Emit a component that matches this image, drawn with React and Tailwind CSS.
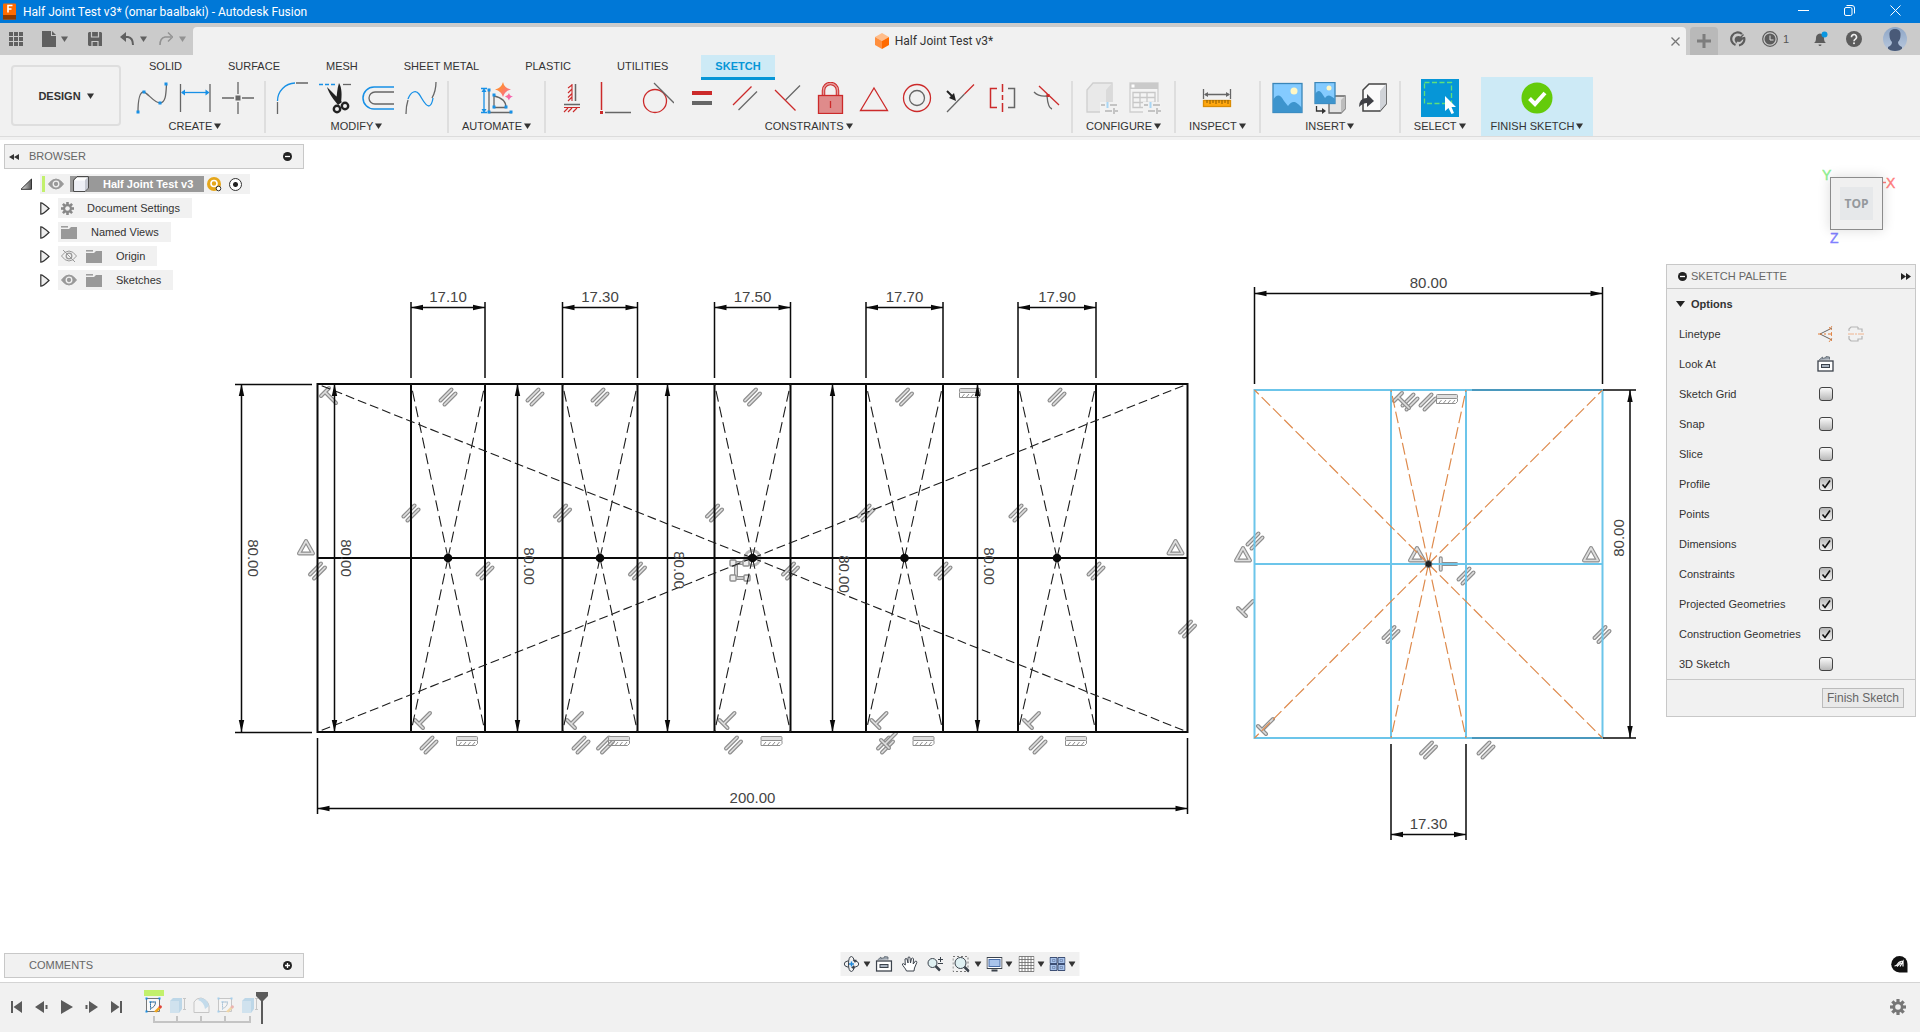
import React from "react";

const G = "#666666";
const B = "#1790e6";
const R = "#cc2a2a";

function Caret({ className = "text-[#333]" }) {
  return (
    <svg width="7" height="6" viewBox="0 0 7 6" className={className} aria-hidden="true">
      <path d="M0 .5h7L3.500 6z" fill="currentColor" />
    </svg>
  );
}

function Ico({ children }) {
  return (
    <svg viewBox="0 0 32 32" width="32" height="32" fill="none" strokeWidth="1.3" aria-hidden="true">
      {children}
    </svg>
  );
}

function Sq({ x, y, s = 3, fill = B }) {
  return <rect x={x - s / 2} y={y - s / 2} width={s} height={s} fill={fill} />;
}

function ConfigMarks() {
  return (
    <g stroke="#c4c4c4" strokeWidth="2">
      <path d="M15 23h4M24 23h7M19 29h7M28 26v6M28 29h4" />
      <path d="M21.500 20v6" stroke="#a9d6f5" />
    </g>
  );
}

const icons = {
  spline: (
    <Ico>
      <path d="M2 30C2 18 4 10 7.500 10S18 21 24 21s6-10 6.500-19" stroke={G} />
      <Sq x={2} y={30} /><Sq x={8} y={10} /><Sq x={24} y={21} /><Sq x={30} y={2} />
    </Ico>
  ),
  dimension: (
    <Ico>
      <path d="M1.500 2v28M31 2v28" stroke={G} />
      <path d="M3 10.500h26" stroke={B} />
      <path d="M2 10.500l4-3v6zM30.500 10.500l-4-3v6z" fill={B} />
    </Ico>
  ),
  point: (
    <Ico>
      <path d="M16 0v12M16 20v12M0 16h12M20 16h12" stroke={G} />
      <rect x="13.500" y="13.500" width="5" height="5" fill={G} />
    </Ico>
  ),
  fillet: (
    <Ico>
      <path d="M1.500 20v12M20 1h12" stroke={G} />
      <path d="M1.500 19A18 18 0 0 1 19 1" stroke={B} />
    </Ico>
  ),
  trim: (
    <Ico>
      <path d="M0 2.500h4M6 2.500h4M12 2.500h4" stroke={B} />
      <path d="M24 2.500h8" stroke={G} />
      <path d="M8 5l15 15-4 3C15 18 10 12 8 5zM20 1c3 5 3 12 2 20l-5-2c1-6 1-12 3-18z" fill="#222" />
      <circle cx="18" cy="27" r="3.200" stroke="#222" strokeWidth="2.400" />
      <circle cx="26" cy="24" r="3.200" stroke="#222" strokeWidth="2.400" />
    </Ico>
  ),
  offset: (
    <Ico>
      <path d="M32 5H12A11 11 0 0 0 12 27H32" stroke={B} strokeWidth="1.500" />
      <path d="M32 10H13a6 6 0 0 0 0 12H32" stroke={G} />
    </Ico>
  ),
  breakCurve: (
    <Ico>
      <path d="M1 32q0-8 2-14M27 16q4-7 4-16" stroke={G} />
      <path d="M3 17C6 9 11 8 14 12S20 24 24 24q3-1 4-8" stroke={B} />
    </Ico>
  ),
  automate: (
    <Ico>
      <path d="M3 8v20M0 6.500h6M0 30.500h6" stroke={B} />
      <path d="M3 6l2.500 4h-5zM3 31l2.500-4h-5z" fill={B} />
      <path d="M8 8v22.500h23M13 14v11.500h12q0-9-12-11.500" stroke={G} />
      <Sq x={8} y={8} /><Sq x={8} y={30} /><Sq x={30} y={30} />
      <Sq x={13} y={13} /><Sq x={13} y={25} /><Sq x={25} y={25} />
      <defs>
        <linearGradient id="spark" x1="0" y1="0" x2="1" y2="1">
          <stop offset=".3" stopColor="#ff8a3c" /><stop offset="1" stopColor="#f45ad0" />
        </linearGradient>
      </defs>
      <path d="M22 0q1.200 6 8 7.500Q23.500 9 22 15q-1.500-6-8-7.500Q20.500 6 22 0zM28 11q.6 3 4 3.500-3.400.8-4 4-.8-3.200-4-4 3.400-.8 4-3.500z" fill="url(#spark)" />
    </Ico>
  ),
  fixHV: (
    <Ico>
      <path d="M19.500 2v17M8 22.500h16" stroke={G} strokeWidth="1.500" />
      <path d="M16 2v17M16 3l-4 3M16 7l-4 4M16 11.500l-4 4M16 15l-4 4M8 25.500h16M12 26l-4 4M16 26l-4 4M21 26l-4 4" stroke={R} strokeWidth="1.100" />
    </Ico>
  ),
  coincident: (
    <Ico>
      <path d="M2.500 0v28" stroke={R} strokeWidth="1.500" /><Sq x={2.5} y={30.5} fill={R} />
      <path d="M6 30.500h26" stroke={G} strokeWidth="1.500" />
    </Ico>
  ),
  tangent: (
    <Ico><circle cx="13" cy="19" r="11.500" stroke={R} /><path d="M12 1l20 20" stroke={G} /></Ico>
  ),
  equal: (
    <Ico><rect x="7" y="9" width="20" height="4" fill={R} /><rect x="7" y="19" width="20" height="4" fill={G} /></Ico>
  ),
  parallel: (
    <Ico><path d="M5 23L23.500 4.500" stroke={R} /><path d="M10.500 28L29 9.500" stroke={G} /></Ico>
  ),
  perpendicular: (
    <Ico><path d="M4 8l20.500 20.500" stroke={R} /><path d="M14.500 18L29 3.500" stroke={G} /></Ico>
  ),
  lock: (
    <Ico>
      <path d="M9.500 14V8.500a7 7 0 0 1 14 0V14" stroke={R} strokeWidth="3.500" />
      <path d="M9.500 14V8.500a7 7 0 0 1 14 0V14" stroke="#e59a9a" strokeWidth="1.500" />
      <rect x="4.500" y="13.500" width="24" height="18" fill="#df8b8b" stroke={R} />
      <path d="M16.500 19v7" stroke={R} />
    </Ico>
  ),
  triangle: (
    <Ico><path d="M17 6l13.500 22.500h-27z" stroke={R} /></Ico>
  ),
  concentric: (
    <Ico><circle cx="17" cy="16" r="13.500" stroke={R} /><circle cx="17" cy="16" r="7.500" stroke={G} /></Ico>
  ),
  midpoint: (
    <Ico>
      <path d="M4 30L21.500 12" stroke={G} /><path d="M21.500 12L31 2.500" stroke={R} />
      <path d="M4 9l6 6" stroke="#222" strokeWidth="2" /><path d="M13 19l-7-3 5-5z" fill="#222" />
    </Ico>
  ),
  symmetry: (
    <Ico>
      <path d="M11 6.500H4.500v19H11M16.500 2v8M16.500 13v5M16.500 21v9" stroke={R} strokeWidth="1.500" />
      <path d="M22 6.500h6.500v19H22" stroke={G} strokeWidth="1.500" />
    </Ico>
  ),
  curvature: (
    <Ico>
      <path d="M5 10q5 5 13 4 1 12 5 13" stroke={G} /><path d="M10 4l20 19" stroke={R} />
      <Sq x={19} y={13.5} fill={R} />
    </Ico>
  ),
  configPart: (
    <Ico>
      <path d="M1 8l6-7h19v22l-6 7H1z" fill="#e9e9e9" stroke="#cfcfcf" />
      <path d="M20 8l6-7v22l-6 7z" fill="#dadada" /><path d="M14 20h18v12H14z" fill="#f2f2f2" />
      <ConfigMarks />
    </Ico>
  ),
  configTable: (
    <Ico>
      <path d="M1 1h28v29H1z" fill="#f4f4f4" stroke="#cfcfcf" /><path d="M1 1h28v6H1z" fill="#cacaca" />
      <rect x="2.500" y="2.500" width="3" height="3" fill="#fff" />
      <path d="M4 10.500h22v15H4zM4 15.500h22M4 20.500h22M11 10.500v15M18 10.500v15" stroke="#c8c8c8" />
      <path d="M14 20h18v12H14z" fill="#f2f2f2" /><ConfigMarks />
    </Ico>
  ),
  measure: (
    <Ico>
      <path d="M2.500 7v10M29.500 7v10M4 12.500h24" stroke={G} />
      <path d="M3 12.500l4-2.500v5zM29 12.500l-4-2.500v5z" fill={G} />
      <rect x="2.500" y="18.500" width="27" height="6" fill="#ffa70f" stroke="#d98c06" />
      <path d="M6 18v3M9 18v4M12 18v3M15 18v4M18 18v3M21 18v4M24 18v3M27 18v4" stroke="#8a5a00" strokeWidth="1" />
    </Ico>
  ),
  image: (
    <Ico>
      <rect x="2" y="1.500" width="29" height="29" fill="#84cbff" stroke="#3a86b8" />
      <circle cx="23" cy="9" r="3.500" fill="#fff7c4" />
      <path d="M2 18c4-6 7-6 11 1l4 5c4-5 7-6 14 2v4.500H2z" fill="#3d94cd" />
    </Ico>
  ),
  imageBody: (
    <Ico>
      <path d="M15 18l3-4h13v13l-4 4H15z" fill="#e3e3e3" stroke={G} /><path d="M27 18l4-4v13l-4 4z" fill="#bdbdbd" />
      <rect x="1" y=".5" width="20" height="21" fill="#84cbff" stroke="#3a86b8" />
      <circle cx="15" cy="6" r="2.500" fill="#fff7c4" />
      <path d="M1 12c3-4 5-4 8 1l2 3c3-4 5-3 10 1v4.500H1z" fill="#3d94cd" />
      <path d="M2.500 24v5H9" stroke="#333" /><path d="M8 26l4 3-4 3z" fill="#333" />
    </Ico>
  ),
  insertBody: (
    <Ico>
      <path d="M6 8l6-6h17v20l-6 7H6z" fill="#fafafa" stroke="#444" strokeWidth="1.500" />
      <path d="M23 9l6-7v20l-6 7z" fill="#d0d3d8" />
      <path d="M2 25q0-9 8-9v-4l7 7-7 6v-4q-4 0-8 4z" fill="#3f4045" />
    </Ico>
  ),
  select: (
    <svg width="38" height="38" viewBox="0 0 38 38" fill="none" className="bg-[#0696d7]" aria-hidden="true">
      <path d="M3.500 3.500h27v21h-27z" stroke="#5fe07a" strokeDasharray="5 2.500" strokeWidth="1.300" />
      <path d="M24 17v15l3.500-3 3 6 2.500-1-2.500-6h4.500z" fill="#fff" />
    </svg>
  ),
  finish: (
    <Ico>
      <circle cx="16" cy="16" r="15.500" fill="#64cb0a" />
      <path d="M8.500 16.500l5.500 5.500 10-11" stroke="#fff" strokeWidth="4" />
    </Ico>
  ),
};

const groups = [
  { label: "CREATE", items: [["Spline", "spline"], ["Sketch Dimension", "dimension"], ["Point", "point"]] },
  { label: "MODIFY", items: [["Fillet", "fillet"], ["Trim", "trim"], ["Offset", "offset"], ["Blend", "breakCurve"]] },
  { label: "AUTOMATE", items: [["Automate", "automate"]] },
  {
    label: "CONSTRAINTS",
    items: [
      ["Horizontal/Vertical", "fixHV"], ["Coincident", "coincident"], ["Tangent", "tangent"], ["Equal", "equal"],
      ["Parallel", "parallel"], ["Perpendicular", "perpendicular"], ["Fix", "lock"], ["MidPoint", "triangle"],
      ["Concentric", "concentric"], ["Collinear", "midpoint"], ["Symmetry", "symmetry"], ["Curvature", "curvature"],
    ],
  },
  { label: "CONFIGURE", items: [["Configure part", "configPart"], ["Configuration table", "configTable"]] },
  { label: "INSPECT", items: [["Measure", "measure"]] },
  { label: "INSERT", items: [["Insert image", "image"], ["Insert decal", "imageBody"], ["Insert derive", "insertBody"]] },
  { label: "SELECT", items: [["Select", "select"]] },
  { label: "FINISH SKETCH", items: [["Finish sketch", "finish"]], active: true },
];

function TitleBar() {
  return (
    <header className="flex h-[23px] shrink-0 items-start bg-[#0078d7] pl-[3px] text-white">
      <svg width="14" height="17" viewBox="0 0 14 17" className="mt-[3px]" aria-hidden="true">
        <rect width="13" height="16" y=".5" rx="1" fill="#ff6b00" />
        <rect y="12" width="13" height="4.500" fill="#8c3a00" />
        <path d="M5 9.500v-7h4.500M5 6h3.500" stroke="#fff" strokeWidth="1.600" fill="none" />
      </svg>
      <h1 className="ml-1.5 mt-1 flex-1 font-[Roboto,'Noto_Sans',sans-serif] text-[12px] leading-4">
        Half Joint Test v3* (omar baalbaki) - Autodesk Fusion
      </h1>
      <div className="flex pr-0.5">
        <button aria-label="Minimize" className="flex h-[21px] w-[46px] items-center justify-center">
          <svg width="11" height="11"><path d="M0 5.500h11" stroke="#fff" /></svg>
        </button>
        <button aria-label="Restore" className="flex h-[21px] w-[46px] items-center justify-center">
          <svg width="11" height="11" fill="none" stroke="#fff"><rect x=".5" y="2.500" width="7.500" height="8" rx="1.500" /><path d="M2.500.5H8a2.500 2.500 0 0 1 2.500 2.500v5.500" /></svg>
        </button>
        <button aria-label="Close" className="flex h-[21px] w-[46px] items-center justify-center">
          <svg width="11" height="11"><path d="M.5.5l10 10M10.500.5l-10 10" stroke="#fff" /></svg>
        </button>
      </div>
    </header>
  );
}

function TabBar() {
  return (
    <div className="flex h-8 shrink-0 items-stretch bg-[#cbcbcb] pt-1">
      <div className="flex w-[193px] shrink-0 items-center pb-1 pl-[9px] text-[#606060]">
        <button aria-label="Data panel">
          <svg width="14" height="14" fill="currentColor">
            <path d="M0 0h4v4H0zM5 0h4v4H5zM10 0h4v4h-4zM0 5h4v4H0zM5 5h4v4H5zM10 5h4v4h-4zM0 10h4v4H0zM5 10h4v4H5zM10 10h4v4h-4z" />
          </svg>
        </button>
        <button aria-label="File" className="ml-[19px] flex items-center gap-[5px]">
          <svg width="14" height="16" fill="currentColor"><path d="M0 0h9v5h5v11H0zM10 0l4 4h-4z" /></svg>
          <Caret className="text-[#606060]" />
        </button>
        <button aria-label="Save" className="ml-5">
          <svg width="14" height="14"><path d="M0 1l1-1h12l1 1v13H1l-1-1z" fill="#606060" /><path d="M3.500 0v5h7V0M4 14V9.500h6V14" stroke="#cbcbcb" strokeWidth="1.200" fill="none" /></svg>
        </button>
        <button aria-label="Undo" className="ml-[18px] flex items-center gap-[6px]">
          <svg width="14" height="14" fill="none"><path d="M2 5h6q5 1 5 8" stroke="#606060" strokeWidth="2" /><path d="M0 5l6-5v10z" fill="#606060" /></svg>
          <Caret className="text-[#606060]" />
        </button>
        <button aria-label="Redo" className="ml-3 flex items-center gap-[6px] text-[#929292]">
          <svg width="14" height="14" fill="none"><path d="M12 5H6Q1 6 1 13" stroke="currentColor" strokeWidth="1.600" /><path d="M9 .5L13.500 5 9 9.500" stroke="currentColor" strokeWidth="1.400" /></svg>
          <Caret className="text-[#929292]" />
        </button>
      </div>
      <div className="flex min-w-0 flex-1 items-center rounded-t bg-[#f1f1f1] pl-2 pr-0.5">
        <div className="flex flex-1 items-center justify-center gap-1.5">
          <svg width="14" height="16"><path d="M7 0l7 4-7 4-7-4z" fill="#ffbd8a" /><path d="M0 4l7 4v8l-7-4z" fill="#ff8f3e" /><path d="M14 4L7 8v8l7-4z" fill="#ff6a00" /></svg>
          <span className="font-[Roboto,'Liberation_Sans',sans-serif] text-[12px]">Half Joint Test v3*</span>
        </div>
        <button aria-label="Close tab" className="p-1">
          <svg width="9" height="9"><path d="M.5.5l8 8M8.500.5l-8 8" stroke="#777" strokeWidth="1.300" /></svg>
        </button>
      </div>
      <button aria-label="New tab" className="ml-1 flex w-7 items-center justify-center rounded-t bg-[#b9b9b9]">
        <svg width="14" height="14"><path d="M7 0v14M0 7h14" stroke="#7d7d7d" strokeWidth="3" /></svg>
      </button>
      <div className="flex items-center pb-1 pl-3 pr-[13px] text-[11px] text-[#555]">
        <button aria-label="Extensions">
          <svg width="16" height="16" fill="none"><path d="M5.500 14A6.500 6.500 0 1 1 12 3M14 6a6.500 6.500 0 0 1-5 8.500" stroke="#5c5c5c" strokeWidth="2.200" /><path d="M5.500 11c-2-3 0-6 3-6l2 .5L13 3l1 1-2.500 2.500L14 6l.5 1.500L12 9c-1 2-3 2.500-4.500 1.500L6 12.500z" fill="#5c5c5c" /></svg>
        </button>
        <button aria-label="Job status" className="ml-4 flex items-center gap-[5px]">
          <svg width="16" height="16" fill="none"><circle cx="8" cy="8" r="7.300" stroke="#5c5c5c" strokeWidth="1.200" /><circle cx="8" cy="8" r="5.500" fill="#5c5c5c" /><path d="M8 4.500V9h3.500" stroke="#ddd" /></svg>
          1
        </button>
        <button aria-label="Notifications" className="ml-6">
          <svg width="16" height="16"><path d="M1 12q2-1 2-5 0-4 4-4.500 4 .5 4 4.500t2 5zM5.500 13.500h3a1.500 1.500 0 0 1-3 0z" fill="#5c5c5c" /><circle cx="11.500" cy="3.500" r="3" fill="#0a96e0" /></svg>
        </button>
        <button aria-label="Help" className="ml-[17px]">
          <svg width="16" height="16" fill="none"><circle cx="8" cy="8" r="8" fill="#5c5c5c" /><path d="M5.500 6.200a2.500 2.500 0 1 1 3.800 2q-1.300.7-1.300 2" stroke="#eee" strokeWidth="1.600" /><circle cx="8" cy="12.300" r="1" fill="#eee" /></svg>
        </button>
        <button aria-label="Account" className="ml-[21px]">
          <svg width="24" height="24"><defs><linearGradient id="av" x2="0" y2="1"><stop stopColor="#8ea6c6" /><stop offset="1" stopColor="#b9c8dd" /></linearGradient><clipPath id="avc"><circle cx="12" cy="12" r="12" /></clipPath></defs>
            <circle cx="12" cy="12" r="12" fill="url(#av)" /><path d="M12 2c4 0 6 2.500 5.500 6.500 0 3-1 5-2.500 6.500 0 3 2 4 4 5v4H5v-4c2-1 4-2 4-5-1.500-1.500-2.500-3.500-2.500-6.500C6 4.500 8 2 12 2z" fill="#495a78" clipPath="url(#avc)" /></svg>
        </button>
      </div>
    </div>
  );
}

function Ribbon() {
  const tabs = ["SOLID", "SURFACE", "MESH", "SHEET METAL", "PLASTIC", "UTILITIES", "SKETCH"];
  return (
    <div className="flex shrink-0 border-b border-[#dcdcdc] bg-[#f1f1f1]">
      <button className="mb-[10px] ml-[11px] mt-[10px] flex w-[110px] shrink-0 items-center justify-center gap-1.5 rounded border-2 border-[#dedede] font-bold">
        DESIGN <Caret />
      </button>
      <div className="flex min-w-0 flex-1 flex-col">
        <nav className="ml-[15px] flex h-[26px] items-start gap-5">
          {tabs.map((t) => (
            <a
              key={t}
              href="#"
              className={
                t === "SKETCH"
                  ? "flex h-[25px] items-center border-b-[3px] border-[#0696d7] bg-[#cdeaf6] px-[14px] font-bold leading-4 text-[#0696d7]"
                  : "flex h-[22px] items-center px-[13px] leading-4"
              }
            >
              {t}
            </a>
          ))}
        </nav>
        <div className="ml-[5px] flex items-start">
          {groups.map((g, i) => (
            <React.Fragment key={g.label}>
              <section
                className={
                  g.active
                    ? "-mt-1 ml-0.5 flex h-[59px] flex-col items-center bg-[#cdeaf6] px-[10px] pt-1"
                    : "flex h-[55px] flex-col items-center px-[10px]"
                }
              >
                <div className="flex h-[34px] items-center gap-[11px]">
                  {g.items.map(([name, icon]) => (
                    <button key={name} aria-label={name} title={name}>{icons[icon]}</button>
                  ))}
                </div>
                <button className={g.active ? "flex items-center gap-0.5 pt-[3px] leading-4" : "flex items-center gap-0.5 px-[3px] pt-[3px] leading-4"}>
                  {g.label} <Caret />
                </button>
              </section>
              {i < 7 && <div className="h-[52px] w-0.5 shrink-0 bg-[#dedede]" />}
            </React.Fragment>
          ))}
        </div>
      </div>
    </div>
  );
}

/* Sketch geometry */
const INK = "#0a0a0a";

function Arrow({ x, y, a }) {
  return <path d="M0 0L-12-2.700V2.700z" fill={INK} transform={`translate(${x} ${y}) rotate(${a})`} />;
}

function DimText({ x, y, a = 0, children }) {
  return (
    <text textAnchor="middle" fill="#444" transform={`translate(${x} ${y}) rotate(${a})`} className="text-[15px]">
      {children}
    </text>
  );
}

function HDim({ x1, x2, y, e1, e2, label }) {
  return (
    <g>
      <path d={`M${x1} ${e1}V${e2}M${x2} ${e1}V${e2}M${x1} ${y}H${x2}`} stroke={INK} strokeWidth="1.500" />
      <Arrow x={x1} y={y} a={180} /><Arrow x={x2} y={y} a={0} />
      <DimText x={(x1 + x2) / 2} y={y - 6}>{label}</DimText>
    </g>
  );
}

function VDim({ x, y1, y2, tx, ty, a, label }) {
  return (
    <g>
      <path d={`M${x} ${y1}V${y2}`} stroke={INK} strokeWidth="1.500" />
      <Arrow x={x} y={y1} a={-90} /><Arrow x={x} y={y2} a={90} />
      <DimText x={tx} y={ty} a={a}>{label}</DimText>
    </g>
  );
}

function Bars({ d }) {
  return (
    <>
      <path d={d} stroke="#8e8e8e" strokeWidth="4" strokeLinecap="round" strokeLinejoin="round" fill="none" />
      <path d={d} stroke="#dedede" strokeWidth="1.700" strokeLinecap="round" strokeLinejoin="round" fill="none" />
    </>
  );
}

const at = (x, y, a = 0) => `translate(${x} ${y}) rotate(${a})`;
const Par = ({ x, y }) => <g transform={at(x, y)}><Bars d="M-7.500 3.500L3.500-7.500" /><Bars d="M-3.500 7.500L7.500-3.500" /></g>;
const Perp = ({ x, y, a = 0 }) => <g transform={at(x, y, a)}><Bars d="M-7-1L1 7M-3 3L8-8" /></g>;
const Tri = ({ x, y }) => <g transform={at(x, y)}><Bars d="M0-6L7 6.500H-7z" /></g>;
const Hatch = ({ x, y }) => (
  <g transform={at(x, y)} fill="none" stroke="#8e8e8e">
    <rect x="-10.500" y="-4.500" width="21" height="4" rx="1" fill="#dedede" />
    <path d="M-10.500-.5V4.500H8.500l2-2V-.5M-8 4l2.500-3M-3.500 4L-1 1M1 4l2.500-3M5.500 4L8 1" />
  </g>
);

const joints = [
  [448, 37, "17.10"], [600, 37.5, "17.30"], [752.5, 38, "17.50"], [904.5, 38.5, "17.70"], [1057, 39, "17.90"],
];
const innerDims = [
  [241.5, 247.5, 558], [334.5, 340.5, 558], [517.5, 523.5, 566], [667.5, 673.5, 570], [832.5, 838.5, 574], [977.5, 983.5, 566],
];

function Drawing() {
  const pars = [
    [535, 397], [317.5, 571], [605.5, 745], [1187.5, 629],
    [1255, 541], [1466, 576], [1391, 634.5], [1602, 634.5], [1428.5, 750], [1486, 750], [1410, 402], [1428, 402],
  ];
  return (
    <svg className="absolute inset-0 h-full w-full" role="img" aria-label="Sketch canvas">
      <g transform="translate(0 -140)" fill="none">
        {pars.map(([x, y]) => <Par key={`${x},${y}`} x={x} y={y} />)}
        <circle cx="752.500" cy="558" r="7.500" stroke="#bdbdbd" strokeWidth="3" />
        <Bars d="M746 563H736V578H747" />
        {[[733, 563], [746, 563], [733, 578], [747, 578]].map(([x, y]) => (
          <rect key={`${x}${y}`} x={x - 3} y={y - 3} width="6" height="6" rx="1" fill="#eee" stroke="#8e8e8e" strokeWidth="1.400" />
        ))}
        {joints.map(([x, w]) => (
          <g key={x}>
            <Par x={x} y={397} /><Par x={x - w} y={513} /><Par x={x + w} y={571} /><Par x={x - 19} y={745} />
            <Perp x={x - 26} y={721} /><Hatch x={x + 19} y={741} />
          </g>
        ))}
        <Perp x={328} y={395} a={90} /><Perp x={888} y={741} />
        <Hatch x={970} y={393} /><Hatch x={1447} y={399} />
        <Tri x={306} y={547} /><Tri x={1175.5} y={547} />
        <Tri x={1243} y={554} /><Tri x={1417} y={554} /><Tri x={1591} y={554} />
        <Perp x={1401} y={400} a={90} /><Perp x={1245} y={609} /><Perp x={1265} y={727} /><Perp x={1445} y={564} a={45} />

        <g stroke={INK} strokeWidth="2">
          <path d="M317.500 384H1187.500V732H317.500z" />
          <path d="M317.500 558H1187.500" strokeWidth="1.800" />
          {joints.map(([x, w]) => <path key={x} d={`M${x - w} 384H${x + w}V732H${x - w}z`} />)}
        </g>
        <g stroke="#1c1c1c" strokeWidth="1.100" strokeDasharray="9 4">
          <path d="M752.500 558L317.500 384M752.500 558L1187.500 384M752.500 558L317.500 732M752.500 558L1187.500 732" />
          {joints.map(([x, w]) => (
            <path key={x} strokeDasharray="11 5" d={`M${x} 558L${x - w} 384M${x} 558L${x + w} 384M${x} 558L${x - w} 732M${x} 558L${x + w} 732`} />
          ))}
        </g>
        {joints.map(([x]) => <circle key={x} cx={x} cy="558" r="4.300" fill={INK} />)}
        {joints.map(([x, w, label]) => (
          <HDim key={label} x1={x - w} x2={x + w} y={307.5} e1={302} e2={378} label={label} />
        ))}
        {innerDims.map(([x, tx, ty]) => <VDim key={x} x={x} y1={384} y2={732} tx={tx} ty={ty} a={90} label="80.00" />)}
        <path d="M235 384.500H312M235 732.500H312" stroke={INK} strokeWidth="1.500" />
        <HDim x1={317.5} x2={1187.5} y={808.5} e1={738} e2={814} label="200.00" />

        <g stroke="#6cc5ea" strokeWidth="2">
          <path d="M1254.500 390H1602.500V738H1254.500zM1254.500 564H1602.500M1391 390V738M1466 390V738" />
          <path d="M1472 390H1602M1472 738H1602" stroke="#4a98bd" />
        </g>
        <path
          d="M1428.500 564L1254.500 390M1428.500 564L1602.500 390M1428.500 564L1254.500 738M1428.500 564L1602.500 738M1428.500 564L1391 390M1428.500 564L1466 390M1428.500 564L1391 738M1428.500 564L1466 738"
          stroke="#de8a4c" strokeWidth="1.200" strokeDasharray="12 4"
        />
        <circle cx="1428.500" cy="564" r="3.500" fill="#222" stroke="#777" />
        <HDim x1={1254.5} x2={1602.5} y={293.5} e1={287} e2={384} label="80.00" />
        <HDim x1={1391} x2={1466} y={834.5} e1={744} e2={840} label="17.30" />
        <path d="M1603 390H1636M1603 738H1636" stroke={INK} strokeWidth="1.500" />
        <VDim x={1630} y1={390} y2={738} tx={1624} ty={538} a={-90} label="80.00" />
      </g>
    </svg>
  );
}

/* Browser tree */
const Eye = ({ off }) => (
  <svg width="16" height="12" viewBox="0 0 16 12" fill="none" aria-hidden="true">
    <path d="M.5 6Q4 1 8 1t7.500 5Q12 11 8 11T.5 6z" fill={off ? "none" : "#999"} stroke="#999" />
    <circle cx="8" cy="6" r="2.800" fill={off ? "none" : "#999"} stroke={off ? "#999" : "#f1f1f1"} strokeWidth="1.300" />
    {off && <path d="M2 0l12 12" stroke="#999" />}
  </svg>
);
const Folder = () => (
  <svg width="16" height="13" viewBox="0 0 16 13" aria-hidden="true"><path d="M0 3h8l2-2h6v12H0z" fill="#999" /><path d="M0 .8h7" stroke="#999" strokeWidth="1.500" /></svg>
);
function Gear({ size = 13, fill = "#888" }) {
  return (
    <svg width={size} height={size} viewBox="-8 -8 16 16" fill={fill} aria-hidden="true">
      {[0, 45, 90, 135].map((a) => <rect key={a} x="-1.600" y="-8" width="3.200" height="16" transform={`rotate(${a})`} />)}
      <circle r="5.500" /><circle r="2.800" fill="#f1f1f1" />
    </svg>
  );
}
const Expand = () => (
  <svg width="10" height="13" fill="none" aria-hidden="true"><path d="M.8.800Q3 .8 9 6.500 3 12.200.8 12.200z" fill="#eee" stroke="#333" strokeWidth="1.200" /></svg>
);

function Round({ plus }) {
  return (
    <svg width="9" height="9" aria-hidden="true">
      <circle cx="4.500" cy="4.500" r="4.500" fill="#222" /><path d={plus ? "M2 4.500h5M4.500 2v5" : "M2 4.500h5"} stroke="#fff" strokeWidth="1.300" />
    </svg>
  );
}

function Browser() {
  const rows = [
    { name: "Document Settings", icons: <Gear />, gap: "ml-[13px]" },
    { name: "Named Views", icons: <Folder />, gap: "ml-[14px]" },
    { name: "Origin", icons: <><Eye off /><span className="w-[9px]" /><Folder /></>, gap: "ml-[14px]" },
    { name: "Sketches", icons: <><Eye /><span className="w-[9px]" /><Folder /></>, gap: "ml-[14px]" },
  ];
  return (
    <aside className="absolute left-1 top-1 w-[300px]">
      <div className="flex h-[25px] items-center border border-[#c8c8c8] bg-[#f1f1f1] pl-1 pr-[11px] text-[#666]">
        <button aria-label="Collapse browser">
          <svg width="10" height="6"><path d="M5 0v6L0 3zM10 0v6L5 3z" fill="#333" /></svg>
        </button>
        <h2 className="ml-[10px] flex-1 pb-0.5">BROWSER</h2>
        <button aria-label="Minimize browser"><Round /></button>
      </div>
      <ul className="mt-[5px] flex flex-col gap-1">
        <li className="flex h-5 items-center pl-[16px]">
          <button aria-label="Collapse">
            <svg width="13" height="12"><defs><linearGradient id="tg"><stop stopColor="#eee" /><stop offset="1" stopColor="#555" /></linearGradient></defs><path d="M1 11.300L11.500 1v10.300z" fill="url(#tg)" stroke="#333" /></svg>
          </button>
          <div className="ml-[7px] flex h-5 items-center bg-[#f1f1f1] pl-0.5 pr-[8px]">
            <span className="h-4 w-[3px] bg-[#c2f06c]" />
            <button aria-label="Toggle visibility" className="ml-[3px]"><Eye /></button>
            <span className="ml-1.5 flex h-4 w-[134px] items-center bg-[#999] pl-[3px] font-bold text-white">
              <svg width="16" height="16"><path d="M.7 4L4 .7h11.300V12L12 15.300H.7z" fill="#fff" stroke="#333" /><path d="M12 4L15 1v11l-3 3z" fill="#c6c9d2" /><path d="M1.200 4.500H12V15H1.200z" fill="#eef0f6" /></svg>
              <span className="ml-[14px]">Half Joint Test v3</span>
            </span>
            <svg className="ml-[3px]" width="15" height="15" fill="none"><circle cx="7" cy="7" r="7" fill="#e5a61a" /><circle cx="7" cy="6.500" r="3" stroke="#fff" strokeWidth="1.600" /><circle cx="11.500" cy="11.500" r="2.300" fill="#fff" stroke="#333" /></svg>
            <input type="radio" name="active-component" defaultChecked aria-label="Activate component" className="ml-[7px] size-[13px] appearance-none rounded-full border border-[#333] bg-[radial-gradient(circle,#222_0_2px,#fff_3px)]" />
          </div>
        </li>
        {rows.map((r) => (
          <li key={r.name} className="flex h-5 items-center pl-9">
            <button aria-label={`Expand ${r.name}`}><Expand /></button>
            <div className="ml-2 flex h-5 items-center bg-[#f1f1f1] pl-[3px] pr-3">
              {r.icons}<span className={r.gap}>{r.name}</span>
            </div>
          </li>
        ))}
      </ul>
    </aside>
  );
}

const LookAt = () => (
  <svg width="17" height="16" viewBox="0 0 17 16" fill="none" aria-hidden="true">
    <rect x="1" y="5" width="15" height="10" fill="#fff" stroke="#3c434c" strokeWidth="1.300" />
    <rect x="4.500" y="8.500" width="8" height="3" fill="#aab4c0" stroke="#3c434c" />
    <path d="M2 4l3.500-3v1.500L9 1.500V.5L12.500 1v2.500" stroke="#5c646e" fill="#9aa3ae" strokeWidth=".8" />
  </svg>
);

function SketchPalette() {
  const options = [
    ["Sketch Grid", false], ["Snap", false], ["Slice", false], ["Profile", true], ["Points", true], ["Dimensions", true],
    ["Constraints", true], ["Projected Geometries", true], ["Construction Geometries", true], ["3D Sketch", false],
  ];
  return (
    <aside className="absolute right-1 top-[124px] w-[250px] border border-[#c8c8c8] bg-[#f1f1f1]">
      <div className="flex h-6 items-center border-b border-[#c8c8c8] pl-[11px] pr-1 text-[#666]">
        <button aria-label="Minimize palette"><Round /></button>
        <h2 className="ml-1 flex-1 pb-0.5">SKETCH PALETTE</h2>
        <button aria-label="Collapse palette">
          <svg width="10" height="7"><path d="M0 0v7l5-3.500zM5 0v7l5-3.500z" fill="#222" /></svg>
        </button>
      </div>
      <button className="flex h-[30px] w-full items-center gap-1.5 pl-[9px] font-bold">
        <svg width="9" height="6"><path d="M0 0h9L4.500 6z" fill="#222" /></svg>Options
      </button>
      <div className="pl-3">
        <div className="flex h-[30px] items-center">
          <span className="w-[139px]">Linetype</span>
          <button aria-label="Construction">
            <svg width="16" height="16" fill="none"><path d="M2 8L14 2M2 8l12 6" stroke="#666" /><path d="M0 8h16" stroke="#e07a35" strokeDasharray="4 2 2 2" /><path d="M13.500 6v4M11 1l3 3M14 0l-3 4M11 12l3 3M14 12l-3 4" stroke="#e07a35" strokeWidth=".8" /></svg>
          </button>
          <button aria-label="Centerline" className="ml-[14px]">
            <svg width="16" height="16" fill="none"><path d="M10 1H3L1 3v2M1 10v3l2 2h7v-2h4v-3M10 1v2h4v3" stroke="#b5b5b5" strokeWidth="1.200" /><path d="M0 8h16" stroke="#f0b48e" strokeDasharray="6 1 2 1" /></svg>
          </button>
        </div>
        <div className="flex h-[30px] items-center">
          <span className="w-[138px]">Look At</span>
          <button aria-label="Look At"><LookAt /></button>
        </div>
        {options.map(([name, on]) => (
          <label key={name} className="flex h-[30px] items-center">
            <span className="w-[140px] whitespace-nowrap">{name}</span>
            <span className="grid">
              <input
                type="checkbox"
                defaultChecked={on}
                className="peer col-start-1 row-start-1 size-[14px] appearance-none rounded-[3px] border border-[#444] bg-linear-to-b from-[#fafafa] to-[#b8b8b8] checked:from-[#b8b8b8] checked:to-[#f2f2f2]"
              />
              <svg className="pointer-events-none invisible col-start-1 row-start-1 peer-checked:visible" width="14" height="14" fill="none">
                <path d="M3.500 7.500l2.500 3 5-7" stroke="#111" strokeWidth="1.600" />
              </svg>
            </span>
          </label>
        ))}
      </div>
      <div className="flex h-[37px] items-center justify-end border-t border-[#c8c8c8] pr-[11px]">
        <button className="h-5 border border-[#bbb] bg-[#e9e9e9] px-1 text-[12px] leading-4 text-[#666]">Finish Sketch</button>
      </div>
    </aside>
  );
}

function ViewCube() {
  return (
    <div className="absolute right-[20px] top-[28px] h-[84px] w-[78px]">
      <svg width="78" height="84" className="absolute inset-0 text-[14px]" aria-label="View axes">
        <text x="0" y="12" fill="#8df08d" stroke="#8df08d" strokeWidth=".4">Y</text>
        <text x="64" y="20" fill="#ff7c7c" stroke="#ff7c7c" strokeWidth=".4">X</text>
        <text x="8" y="75" fill="#8080ff" stroke="#8080ff" strokeWidth=".4">Z</text>
        <path d="M60 14.500h4" stroke="#ff7c7c" strokeWidth="1.500" />
      </svg>
      <button className="absolute left-2 top-[9px] flex size-[53px] items-center justify-center border border-[#8c8c8c] bg-[#f0f0f0] shadow-[0_0_12px_rgba(0,0,0,0.14)]">
        <span className="flex size-[33px] items-center justify-center bg-[#e6e8ea] font-['Open_Sans',sans-serif] text-[12px] font-bold text-[#94989c]">TOP</span>
      </button>
    </div>
  );
}

function NavBar() {
  const s = "#3c434c";
  return (
    <div className="absolute bottom-1.5 left-1/2 flex h-6 -translate-x-1/2 items-center bg-[#f1f1f1] pl-[3px] pr-1">
      <button aria-label="Orbit" className="flex items-center gap-1">
        <svg width="16" height="16" fill="none" stroke={s}><path d="M11 10.500q-1 5-3 5-3 0-3-7.500T8 .500q2 0 3 5M5 11.300Q.7 10.500.7 8T5 4.700M11 4.700Q15.300 5.500 15.300 8T11 11.300L9 11.500" /><path d="M9.500 4l2 2.500L13 4zM10.500 9.500l-2.500 2 2.500 1.500z" fill={s} strokeWidth=".5" /><path d="M8 5.500v5M5.500 8h5" stroke="#1e86d8" strokeWidth="1.500" /></svg><Caret />
      </button>
      <button aria-label="Look at" className="ml-[5px]"><LookAt /></button>
      <button aria-label="Pan" className="ml-[9px]">
        <svg width="17" height="16" fill="#fff" stroke={s}><path d="M5 15C4 12 1 10 .8 8q1.200-1.200 3 1L3.500 3q1.200-1 2 0L6.500 7V1.500q1-1.200 2 0L9 7l1-4.500q1-1 2 .2L11.700 8 14 5q1.500 0 1.300 1.500L13 12l-.5 3z" /></svg>
      </button>
      <button aria-label="Zoom" className="ml-[8px]">
        <svg width="17" height="16" fill="none" stroke={s}><circle cx="6" cy="7" r="4.500" fill="#dff0f2" /><path d="M9 10l4.500 4.500" strokeWidth="2.500" /><path d="M11.500 3.500h5M14 1v5M11.500 7.500h5" /></svg>
      </button>
      <button aria-label="Fit" className="ml-[9px] flex items-center gap-[5px]">
        <svg width="17" height="17" fill="none" stroke={s}><path d="M.5.5h15v15H.5z" stroke="#777" strokeDasharray="2 2" /><circle cx="8" cy="7" r="5.500" fill="#dff0f2" /><path d="M12 11l4.500 4.500" strokeWidth="2.500" /></svg><Caret />
      </button>
      <button aria-label="Display settings" className="ml-[5px] flex items-center gap-[3px]">
        <svg width="16" height="16" fill="#fff" stroke={s}><rect x=".5" y="1.500" width="15" height="11" /><rect x="2.500" y="3.500" width="11" height="7" fill="#a9c4ec" stroke="#4a6ea8" /><path d="M5 14.500h6" strokeWidth="2" /></svg><Caret />
      </button>
      <button aria-label="Grid and snaps" className="ml-1.5 flex items-center gap-[3px]">
        <svg width="16" height="16" fill="#fff" stroke="#666"><path d="M.5.500h15v15H.5zM3.500.5v15M6.500.5v15M9.500.5v15M12.500.5v15M.5 3.500h15M.5 6.500h15M.5 9.500h15M.5 12.500h15" strokeWidth=".8" /></svg><Caret />
      </button>
      <button aria-label="Viewports" className="ml-[5px] flex items-center gap-[3px]">
        <svg width="16" height="14" fill="#a9c4ec" stroke="#3d4f75"><path d="M.5.5h7v6h-7zM8.500.5h7v6h-7zM.5 7.500h7v6h-7zM8.500 7.500h7v6h-7z" /><path d="M3 2.500h2.500v2H3zM10.500 2.500H13v2h-2.500zM3 9.500h2.500v2H3zM10.500 9.500H13v2h-2.500z" strokeWidth=".4" /></svg><Caret />
      </button>
    </div>
  );
}

function SketchFeature() {
  return (
    <svg width="17" height="16" fill="none"><path d="M1.500 1.500h13v13h-13z" fill="#fafafa" stroke="#777" /><path d="M5.500 11.500V5h5q0 5-5 6.500" stroke="#4a6c88" /><path d="M4 5h8M5.500 4v9" stroke="#4aa3e6" strokeDasharray="1 1" /><Sq x={1.5} y={1.5} s={2} /><Sq x={14.5} y={1.5} s={2} /><Sq x={1.5} y={14.5} s={2} /><path d="M9 14.500l5.500-5.500 1.500 2-4.500 4.500z" fill="#f0a51c" /><circle cx="15.300" cy="9.800" r="1.600" fill="#e0453a" /></svg>
  );
}
const Extrude = () => (
  <svg width="17" height="16"><path d="M1 4l3-3h9v11l-3 4H1z" fill="#5fa8d8" /><path d="M1 4h9v12H1z" fill="#94c8ea" /><path d="M15.500 1v12M14 1.500h3M14 12.500h3" stroke="#777" /></svg>
);
const FilletFeature = () => (
  <svg width="17" height="16" fill="none"><path d="M1 15.500V5q2-4 7-4 7 2 8 8v6.500z" fill="#f8f8f8" stroke="#777" /><path d="M7 1q7 0 9 8l-4 3Q11 5 5 3z" fill="#6fb4e2" /></svg>
);

function Timeline() {
  const play = [
    ["Go to start", "M0 0h2v12H0zM11 0v12L2.500 6z", 11],
    ["Step back", "M9 0v12L0 6zM10.500 4h2v4h-2z", 13],
    ["Play", "M0 0l12 7-12 7z", 12],
    ["Step forward", "M4 0v12l9-6zM.5 4h2v4h-2z", 13],
    ["Go to end", "M0 0v12l8.500-6zM9 0h2v12H9z", 11],
  ];
  const features = [["Sketch 1", <SketchFeature key="a" />], ["Extrude 1", <Extrude key="b" />], ["Fillet 1", <FilletFeature key="c" />], ["Sketch 2", <SketchFeature key="d" />], ["Extrude 2", <Extrude key="e" />]];
  return (
    <footer className="flex h-[50px] shrink-0 items-start border-t border-[#d4d4d4] bg-[#f1f1f1] pl-[10px] pr-[14px]">
      <div className="mt-4 flex h-4 items-center gap-3">
        {play.map(([name, d, w]) => (
          <button key={name} aria-label={name} className="flex w-[13px] justify-center">
            <svg width={w} height={name === "Play" ? 14 : 12}><path d={d} fill="#5b5b5b" /></svg>
          </button>
        ))}
      </div>
      <div className="ml-[21px] mt-[7px] flex flex-col">
        <span className="h-1.5 w-5 bg-[#c2f06c]" />
        <div className="ml-px mt-px flex gap-[7px]">
          {features.map(([name, icon], i) => (
            <button key={name} aria-label={name} className={i === 0 ? "" : "opacity-35"}>{icon}</button>
          ))}
        </div>
        <svg width="108" height="7" className="ml-[9px] mt-[3px]" fill="none"><path d="M1 0v6h96V0M24 0v6M48 0v6M72 0v6" stroke="#c4c4c4" strokeWidth="2" /></svg>
      </div>
      <button aria-label="Timeline marker" className="-ml-[5px] mt-[9px]">
        <svg width="12" height="32"><path d="M0 0h12v4L7 9v23H5V9L0 4z" fill="#5b5b5b" /></svg>
      </button>
      <button aria-label="Timeline settings" className="ml-auto mt-4"><Gear size={16} fill="#777" /></button>
    </footer>
  );
}

export default function App() {
  return (
    <div className="flex h-screen flex-col overflow-hidden bg-white font-['Liberation_Sans',Arial,sans-serif] text-[11px] leading-4 text-[#333]">
      <TitleBar />
      <TabBar />
      <Ribbon />
      <div className="h-[3px] shrink-0 bg-[#f1f1f1]" />
      <main className="relative min-h-0 flex-1 bg-white">
        <Drawing />
        <Browser />
        <ViewCube />
        <SketchPalette />
        <section className="absolute bottom-1 left-1 flex h-[25px] w-[300px] items-center border border-[#c8c8c8] bg-[#f1f1f1] pl-6 pr-[11px] text-[#666]">
          <h2 className="flex-1 pb-0.5">COMMENTS</h2>
          <button aria-label="Add comment"><Round plus /></button>
        </section>
        <NavBar />
        <button aria-label="Assistant" className="absolute bottom-[9px] right-3">
          <svg width="17" height="17" fill="none"><path d="M8.500 0A8 8 0 0 1 16.500 8v8.500h-8a8 8 0 0 1 0-16.500z" fill="#111" /><path d="M3.500 10q2 0 3.500-2.500T12.500 5M6 10.500l4-4M9 10.500l3-5v5" stroke="#fff" strokeWidth="1.200" /></svg>
        </button>
      </main>
      <Timeline />
    </div>
  );
}
